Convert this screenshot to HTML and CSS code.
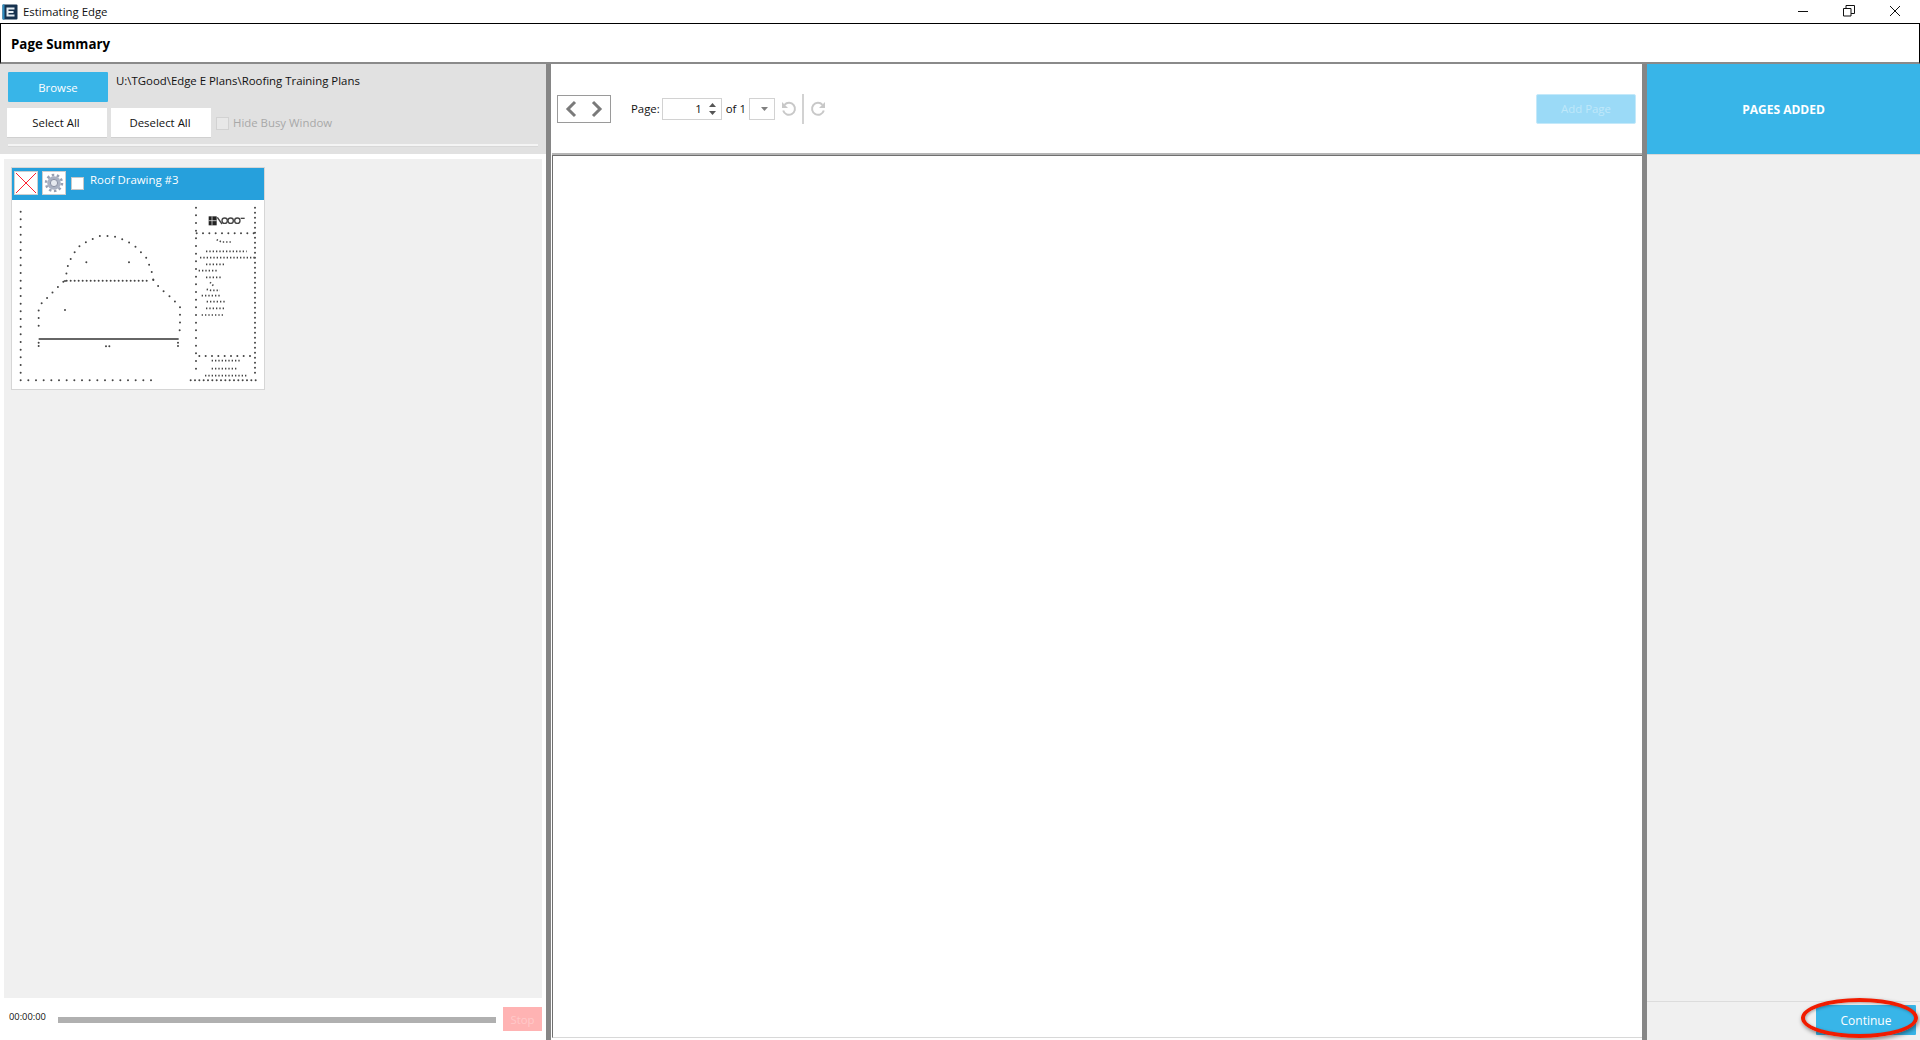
FILE: index.html
```html
<!DOCTYPE html>
<html>
<head>
    <title>Estimating Edge</title>
    <link rel="stylesheet" href="styles.css">
</head>
<body>
    <div class="titlebar">
        <svg class="app-icon" width="16" height="16" viewBox="0 0 16 16">
            <rect x="0.5" y="0.5" width="15" height="15" rx="1" fill="#16324f"/>
            <rect x="0.5" y="0.5" width="2" height="15" fill="#2f8fc4"/>
            <path d="M4.5 3.5h8v2h-6v1.5h5v2h-5v1.5h6v2h-8z" fill="#e6eef4"/>
        </svg>
        <span class="app-name">Estimating Edge</span>
        <div class="window-buttons">
            <svg width="12" height="12" viewBox="0 0 12 12"><path d="M1 6.5h10" stroke="#111" fill="none"/></svg>
            <svg width="12" height="12" viewBox="0 0 12 12"><path d="M.5 3.5h7.5v7.5h-7.5zM3 3.5v-3h8.500v8h-3.500" stroke="#111" fill="none"/></svg>
            <svg width="12" height="12" viewBox="0 0 12 12"><path d="M1 1l10 10M11 1l-10 10" stroke="#111" fill="none"/></svg>
        </div>
    </div>

    <div class="page-header">Page Summary</div>

    <div class="main">
        <div class="left-col">
            <div class="left-top">
                <div class="browse-row">
                    <button class="btn btn-blue btn-browse">Browse</button>
                    <span class="path">U:\TGood\Edge E Plans\Roofing Training Plans</span>
                </div>
                <div class="select-row">
                    <button class="btn btn-white">Select All</button>
                    <button class="btn btn-white">Deselect All</button>
                    <span class="check check-disabled"></span>
                    <span class="hide-label">Hide Busy Window</span>
                </div>
                <div class="left-rule"></div>
            </div>
            <div class="thumb-panel">
                <div class="card">
                    <div class="card-head">
                        <span class="icon-btn">
                            <svg width="22" height="22" viewBox="0 0 22 22"><path d="M1 1l20 20M21 1l-20 20" stroke="#ff2030" stroke-width="1" fill="none"/></svg>
                        </span>
                        <span class="icon-btn">
                            <svg width="20" height="20" viewBox="0 0 20 20">
                                <circle cx="10" cy="10" r="6.800" fill="#aab1c2"/>
                                <circle cx="10" cy="10" r="8" fill="none" stroke="#9aa1b3" stroke-width="2.500" stroke-dasharray="2.500 2.530"/>
                                <circle cx="10" cy="10" r="3.600" fill="#e6e9ef" stroke="#8a90a3"/>
                            </svg>
                        </span>
                        <span class="check check-card"></span>
                        <span class="card-title">Roof Drawing #3</span>
                    </div>
                    <svg class="drawing" width="252" height="190" viewBox="36 135 756 570">
                        <g fill="none" stroke="#444" stroke-width="6" stroke-linecap="round" stroke-dasharray="0 23">
                            <path d="M62 170V660"/>
                            <path d="M62 676H455"/>
                            <path d="M195 378L205 325 220 297 240 272 270 255 300 243 340 243 380 258 410 278 440 310 455 350 460 375"/>
                            <path d="M190 380L165 405 145 425 125 445 116 465 116 495 116 525"/>
                            <path d="M460 375L480 400 510 425 525 440 540 455 540 480 540 510 538 540"/>
                            <path d="M588 158V660"/>
                            <path d="M765 158V660" stroke-dasharray="0 15"/>
                            <path d="M572 676H780" stroke-dasharray="0 13"/>
                            <path d="M590 235H765" stroke-dasharray="0 19"/>
                            <path d="M598 603H765" stroke-dasharray="0 19"/>
                            <path d="M200 377H445" stroke-dasharray="0 12"/>
                            <path d="M116 563V575M534 563V575M318 574H332M259 322H259.100M387 322H387.100M195 465H195.100" stroke-dasharray="0 10"/>
                        </g>
                        <path d="M116 552H536" stroke="#333" stroke-width="5" fill="none"/>
                        <g fill="none" stroke="#444" stroke-width="5" stroke-dasharray="4 6">
                            <path d="M650 254L665 261H698"/>
                            <path d="M618 289H740"/>
                            <path d="M600 308H765"/>
                            <path d="M618 328H672"/>
                            <path d="M596 347H652"/>
                            <path d="M618 367H666"/>
                            <path d="M630 382L640 392"/>
                            <path d="M620 403L632 406H660"/>
                            <path d="M605 422H665"/>
                            <path d="M620 440H675"/>
                            <path d="M618 460H675"/>
                            <path d="M605 480H675"/>
                            <path d="M635 617H720"/>
                            <path d="M635 641H715"/>
                            <path d="M615 662H740"/>
                        </g>
                        <rect x="626" y="184" width="24" height="27" fill="#222"/>
                        <path d="M636 184v27M626 197h24" stroke="#fff" stroke-width="2" fill="none"/>
                        <g fill="none" stroke="#444" stroke-width="4">
                            <path d="M652 187L666 207"/>
                            <circle cx="674" cy="197" r="8"/>
                            <circle cx="692" cy="197" r="8"/>
                            <circle cx="712" cy="197" r="8"/>
                            <path d="M722 190h12"/>
                        </g>
                    </svg>
                </div>
            </div>
            <div class="timer-row">
                <span class="timer">00:00:00</span>
                <div class="progress"></div>
                <button class="btn btn-stop">Stop</button>
            </div>
        </div>

        <div class="splitter"></div>

        <div class="center-col">
            <div class="toolbar">
                <div class="nav-box">
                    <svg width="14" height="18" viewBox="0 0 14 18"><path d="M11 2L4 9l7 7" stroke="#7a7a7a" stroke-width="3" fill="none"/></svg>
                    <svg width="14" height="18" viewBox="0 0 14 18"><path d="M3 2l7 7-7 7" stroke="#7a7a7a" stroke-width="3" fill="none"/></svg>
                </div>
                <span class="tool-text page-label">Page:</span>
                <div class="page-input">
                    <span class="page-num">1</span>
                    <span class="spin">
                        <svg width="9" height="14" viewBox="0 0 9 14"><path d="M4.500 1L8 5H1zM4.500 13L1 9h7z" fill="#555"/></svg>
                    </span>
                </div>
                <span class="tool-text of-label">of 1</span>
                <div class="combo">
                    <svg width="7" height="4" viewBox="0 0 7 4"><path d="M0 0h7L3.500 4z" fill="#808080"/></svg>
                </div>
                <svg class="undo" width="16" height="16" viewBox="0 0 16 16"><path d="M3.500 3.800A6 6 0 1 1 2.200 9.500" stroke="#c8c8c8" stroke-width="2" fill="none"/><path d="M1 1v6h6z" fill="#c8c8c8"/></svg>
                <div class="tool-sep"></div>
                <svg class="redo" width="16" height="16" viewBox="0 0 16 16"><path d="M12.500 3.800A6 6 0 1 0 13.800 9.500" stroke="#c8c8c8" stroke-width="2" fill="none"/><path d="M15 1v6H9z" fill="#c8c8c8"/></svg>
                <button class="btn btn-add">Add Page</button>
            </div>
            <div class="page-view"></div>
        </div>

        <div class="splitter"></div>

        <div class="right-col">
            <div class="pages-head">PAGES ADDED</div>
            <div class="pages-list"></div>
            <div class="continue-row">
                <button class="btn btn-blue btn-continue">Continue</button>
                <div class="red-ellipse"></div>
            </div>
        </div>
    </div>
</body>
</html>
```

FILE: styles.css
```css
* { box-sizing: border-box; }
html, body { margin: 0; height: 100%; overflow: hidden; }
body { width: 1920px; height: 1040px; background: white; color: #111; font-family: "Open Sans", "Noto Sans", sans-serif; font-size: 11.4px; display: flex; flex-direction: column; }

.titlebar { height: 23px; display: flex; align-items: center; padding-left: 2px; flex: none; }
.app-icon { margin-right: 5px; }
.window-buttons { margin-left: auto; margin-top: -2px; display: flex; gap: 34px; padding-right: 19px; }
.window-buttons svg { display: block; }

.page-header { height: 41px; flex: none; border: 1px solid black; border-bottom: 2px solid #8a8a8a; padding: 2px 0 0 10px; display: flex; align-items: center; font-size: 13.3px; font-weight: 700; color: black; }

.main { flex: 1; display: flex; min-height: 0; }

.btn { border: none; font-family: inherit; font-size: 11.4px; padding: 0; }
.btn-blue { background: #38b5e8; color: white; border-radius: 1px; }
.btn-white { background: white; color: #111; width: 100px; height: 30px; border-bottom: 1px solid #d0d0d0; padding-right: 2px; }

.left-col { width: 546px; display: flex; flex-direction: column; flex: none; }
.left-top { height: 90px; background: #e1e1e1; padding: 8px 8px 0 7px; flex: none; }
.browse-row { display: flex; height: 30px; padding-left: 1px; }
.btn-browse { width: 100px; height: 30px; }
.path { margin: 1px 0 0 8px; line-height: 16px; }
.select-row { display: flex; align-items: center; gap: 4px; margin-top: 6px; }
.check { display: block; flex: none; }
.check-disabled { width: 13px; height: 13px; margin-left: 1px; background: #e8e8e8; border: 1px solid #d2d2d2; }
.hide-label { color: #a8a8a8; margin-top: -1px; }
.left-rule { height: 3px; background: #f4f4f4; border-bottom: 1px solid #d8d8d8; margin: 6px 0 0 1px; }

.thumb-panel { flex: 1; background: #f0f0f0; margin: 5px 4px 0 4px; padding: 8px 7px; min-height: 0; }
.card { width: 254px; height: 223px; background: white; border: 1px solid #d6d6d6; }
.card-head { height: 32px; background: #26a0dc; display: flex; align-items: flex-start; padding: 3px 0 0 2px; }
.icon-btn { width: 24px; height: 24px; margin-right: 4px; background: white; border: 1px solid #cfcfcf; display: flex; align-items: center; justify-content: center; }
.icon-btn svg { display: block; }
.check-card { width: 13px; height: 13px; margin: 6px 6px 0 1px; background: white; border: 1px solid #c8c8c8; }
.card-title { color: white; line-height: 16px; margin-top: 1px; }
.drawing { display: block; }

.timer-row { height: 42px; flex: none; display: flex; align-items: center; padding: 0 4px 0 9px; }
.timer { font-size: 9.3px; width: 49px; margin-top: -5px; }
.progress { width: 438px; height: 6px; background: #b0b0b0; margin-top: 1px; }
.btn-stop { width: 39px; height: 24px; margin-left: 7px; background: #ffb3b3; color: #ffc9c9; }

.splitter { width: 5px; flex: none; background: #868686; }

.center-col { width: 1091px; flex: none; display: flex; flex-direction: column; padding-left: 1px; }
.toolbar { height: 91px; flex: none; display: flex; align-items: center; padding: 0 6px 0 5px; border-bottom: 2px solid #b5b5b5; }
.nav-box { width: 54px; height: 28px; border: 1px solid #9a9a9a; display: flex; align-items: center; justify-content: space-between; padding: 0 6px 0 6px; }
.nav-box svg { display: block; }
.tool-text { color: #111; }
.page-label { margin-left: 20px; }
.page-input { width: 60px; height: 22px; margin-left: 2px; border: 1px solid #d2d2d2; display: flex; align-items: center; justify-content: flex-end; }
.page-num { margin-right: 6px; }
.spin { width: 13px; margin-right: 0; }
.spin svg { display: block; }
.of-label { margin-left: 4px; }
.combo { width: 26px; height: 22px; margin-left: 3px; border: 1px solid #d2d2d2; display: flex; align-items: center; justify-content: flex-end; padding-right: 6px; }
.undo { margin-left: 6px; }
.tool-sep { width: 2px; height: 30px; background: #d2d2d2; margin: 0 6px 0 5px; }
.btn-add { width: 100px; height: 30px; margin-left: auto; background: #9bdaf7; color: #bfe8fa; border: 1px solid #c4e9fa; border-radius: 2px; }
.page-view { flex: 1; border-left: 1px solid #6f6f6f; border-top: 1px solid #6f6f6f; border-bottom: 1px solid #d8d8d8; margin-bottom: 2px; }

.right-col { flex: 1; display: flex; flex-direction: column; background: #f0f0f0; min-width: 0; }
.pages-head { height: 91px; flex: none; background: #38b5e8; color: white; font-weight: 700; font-size: 12px; display: flex; align-items: center; justify-content: center; border-bottom: 1px solid #d8d8d8; }
.pages-list { flex: 1; border-bottom: 1px solid #dcdcdc; }
.continue-row { height: 38px; flex: none; position: relative; display: flex; justify-content: flex-end; padding: 3px 4px 0 0; }
.btn-continue { width: 100px; height: 30px; font-size: 12px; }
.red-ellipse { position: absolute; left: 154px; top: -4px; width: 117px; height: 40px; border: 4px solid #f01c00; border-radius: 50%; box-shadow: 1px 2px 4px rgba(0,0,0,0.45), inset 1px 1px 3px rgba(0,0,0,0.3); }
```
